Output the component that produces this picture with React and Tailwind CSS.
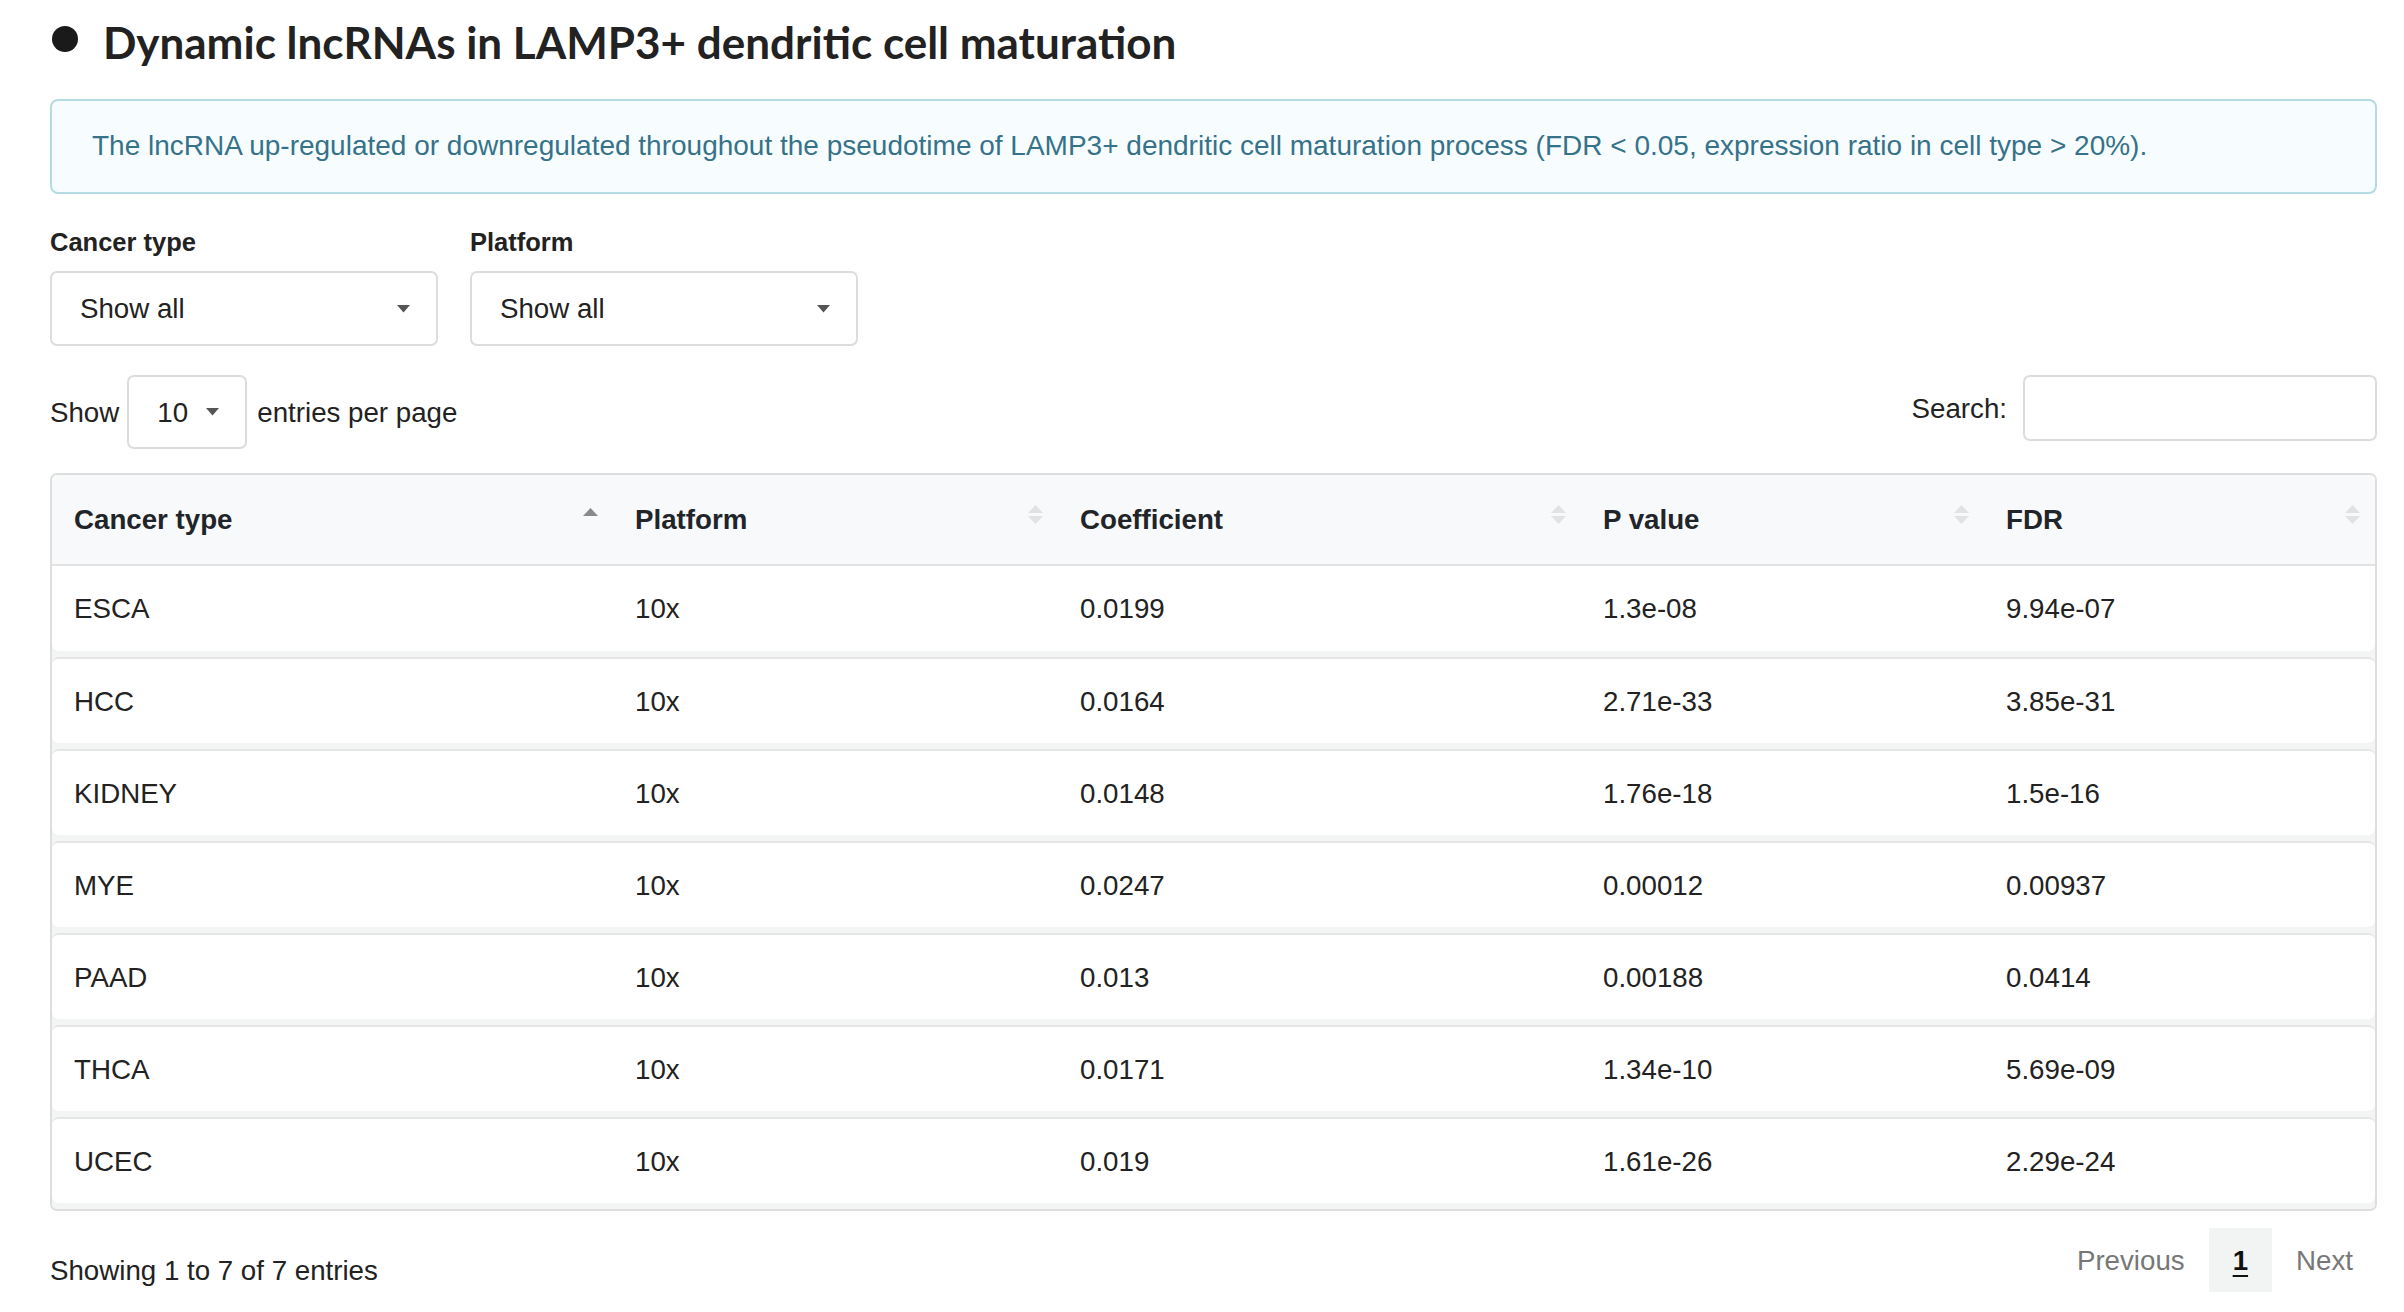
import React from 'react';

// rows of the lncRNA table
const rows = [
  ['ESCA', '10x', '0.0199', '1.3e-08', '9.94e-07'],
  ['HCC', '10x', '0.0164', '2.71e-33', '3.85e-31'],
  ['KIDNEY', '10x', '0.0148', '1.76e-18', '1.5e-16'],
  ['MYE', '10x', '0.0247', '0.00012', '0.00937'],
  ['PAAD', '10x', '0.013', '0.00188', '0.0414'],
  ['THCA', '10x', '0.0171', '1.34e-10', '5.69e-09'],
  ['UCEC', '10x', '0.019', '1.61e-26', '2.29e-24'],
];

const headers = ['Cancer type', 'Platform', 'Coefficient', 'P value', 'FDR'];

const grid = 'grid grid-cols-[561px_445px_523px_403px_1fr]';

function Caret() {
  return (
    <svg width="13" height="8" viewBox="0 0 13 8" className="shrink-0">
      <path d="M0 0 L13 0 L6.5 7.5 Z" fill="#555" />
    </svg>
  );
}

function SortIcon({ active }) {
  return (
    <svg width="15" height="19" viewBox="0 0 15 19" className={`shrink-0 ${active ? '-translate-y-[2px]' : '-translate-y-[5px]'}`}>
      <path d="M0 8 L7.5 0 L15 8 Z" fill={active ? '#8a8a8a' : '#e2e2e2'} />
      {!active && <path d="M0 11 L7.5 19 L15 11 Z" fill="#e2e2e2" />}
    </svg>
  );
}

function FilterSelect({ label }) {
  return (
    <div className="flex flex-col">
      <span className="text-[25.5px] font-bold text-[#222] leading-[1.2] mb-[14px]">{label}</span>
      <div className="w-[388px] h-[75px] border-2 border-[#dcdcdc] rounded-[7px] flex items-center justify-between pl-[28px] pr-[26px]">
        <span className="text-[27.7px] text-[#222]">Show all</span>
        <Caret />
      </div>
    </div>
  );
}

export default function App() {
  return (
    <div className="min-h-screen bg-white pl-[50px] pr-[27px] pt-[16px] text-[#212529]" style={{ fontFamily: '"Liberation Sans", Arial, sans-serif' }}>
      {/* title */}
      <div className="flex items-center">
        <span className="w-[26px] h-[26px] rounded-full bg-[#1a1a1a] ml-[2px] mr-[25px] translate-y-[-3px]" />
        <h1 className="text-[44px] font-bold leading-[1.2] text-[#222]" style={{ fontFamily: 'Lato, "Liberation Sans", sans-serif' }}>
          Dynamic lncRNAs in LAMP3+ dendritic cell maturation
        </h1>
      </div>

      {/* info alert */}
      <div className="mt-[30px] h-[95px] border-2 border-[#b4dbe4] bg-[#f7fdfe] rounded-[8px] flex items-center px-[40px]">
        <p className="text-[28px] text-[#36728a]">
          The lncRNA up-regulated or downregulated throughout the pseudotime of LAMP3+ dendritic cell maturation process (FDR &lt; 0.05, expression ratio in cell type &gt; 20%).
        </p>
      </div>

      {/* filters */}
      <div className="mt-[33px] flex gap-[32px]">
        <FilterSelect label="Cancer type" />
        <FilterSelect label="Platform" />
      </div>

      {/* length + search */}
      <div className="mt-[29px] flex items-start justify-between text-[27.7px] text-[#222]">
        <div className="flex items-center h-[74px]">
          <span>Show</span>
          <div className="ml-[8px] w-[120px] h-[74px] border-2 border-[#dcdcdc] rounded-[7px] flex items-center pl-[28px] pr-[26px] justify-between">
            <span>10</span>
            <Caret />
          </div>
          <span className="ml-[10px]">entries per page</span>
        </div>
        <div className="flex items-center h-[66px]">
          <span>Search:</span>
          <div className="ml-[16px] w-[354px] h-[66px] border-2 border-[#dcdcdc] rounded-[7px]" />
        </div>
      </div>

      {/* table */}
      <div className="mt-[24px] border-2 border-[#dedede] rounded-[7px] overflow-hidden">
        <div className={`${grid} h-[91px] bg-[#f8f9fa] border-b-2 border-[#e3e3e3]`}>
          {headers.map((h, i) => (
            <div key={h} className="flex items-center justify-between pl-[22px] pr-[15px]">
              <span className="text-[27.7px] font-bold">{h}</span>
              <SortIcon active={i === 0} />
            </div>
          ))}
        </div>
        <div className="bg-[#f3f4f4] flex flex-col gap-[6px] pb-[6px]">
          {rows.map((r, i) => (
            <div
              key={r[0]}
              className={`${grid} bg-white rounded-[7px] ${i === 0 ? 'h-[85px] rounded-t-none' : 'h-[86px] border-t-2 border-[#e4e5e5]'}`}
            >
              {r.map((c, j) => (
                <div key={j} className="flex items-center pl-[22px] text-[27.7px] text-[#222]">
                  {c}
                </div>
              ))}
            </div>
          ))}
        </div>
      </div>

      {/* footer */}
      <div className="mt-[17px] flex items-start justify-between text-[27.7px]">
        <span className="pt-[22px] text-[#222]">Showing 1 to 7 of 7 entries</span>
        <div className="flex items-center h-[64px]">
          <span className="px-[24px] text-[#777]">Previous</span>
          <span className="px-[24px] h-[64px] flex items-center bg-[#f2f3f3] font-bold underline underline-offset-[5px] text-[#111]">1</span>
          <span className="px-[24px] text-[#777]">Next</span>
        </div>
      </div>
    </div>
  );
}
